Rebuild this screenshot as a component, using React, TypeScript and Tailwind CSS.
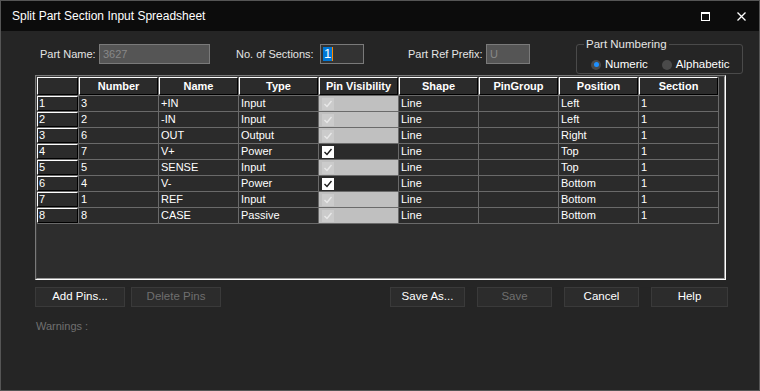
import React from "react";

type Row = {
  n: string;
  name: string;
  type: string;
  visible: boolean;
  shape: string;
  group: string;
  pos: string;
  sec: string;
};

const ROWS: Row[] = [
  { n: "3", name: "+IN", type: "Input", visible: false, shape: "Line", group: "", pos: "Left", sec: "1" },
  { n: "2", name: "-IN", type: "Input", visible: false, shape: "Line", group: "", pos: "Left", sec: "1" },
  { n: "6", name: "OUT", type: "Output", visible: false, shape: "Line", group: "", pos: "Right", sec: "1" },
  { n: "7", name: "V+", type: "Power", visible: true, shape: "Line", group: "", pos: "Top", sec: "1" },
  { n: "5", name: "SENSE", type: "Input", visible: false, shape: "Line", group: "", pos: "Top", sec: "1" },
  { n: "4", name: "V-", type: "Power", visible: true, shape: "Line", group: "", pos: "Bottom", sec: "1" },
  { n: "1", name: "REF", type: "Input", visible: false, shape: "Line", group: "", pos: "Bottom", sec: "1" },
  { n: "8", name: "CASE", type: "Passive", visible: false, shape: "Line", group: "", pos: "Bottom", sec: "1" },
];

const HEADERS = ["Number", "Name", "Type", "Pin Visibility", "Shape", "PinGroup", "Position", "Section"];

function Check({ enabled }: { enabled: boolean }) {
  return (
    <div
      className={`ml-[3px] w-[12px] h-[12px] flex items-center justify-center ${
        enabled ? "bg-white" : "bg-[#cbcbcb]"
      }`}
    >
      <svg width="10" height="10" viewBox="0 0 10 10">
        <polyline
          points="1.5,5 4,7.5 8.5,2"
          fill="none"
          stroke={enabled ? "#1a1a1a" : "#e8e8e8"}
          strokeWidth="1.4"
        />
      </svg>
    </div>
  );
}

function Cell({ children }: { children?: React.ReactNode }) {
  return (
    <div className="bg-[#2b2b2b] text-white pl-[2px] leading-[15px] whitespace-nowrap overflow-hidden">
      {children}
    </div>
  );
}

function Btn({ label, disabled, w }: { label: string; disabled?: boolean; w: string }) {
  return (
    <button
      className={`${w} h-[20px] bg-[#2c2c2c] border border-[#3a3a3a] text-[11.5px] ${
        disabled ? "text-[#6f6f6f]" : "text-white"
      } leading-none`}
    >
      {label}
    </button>
  );
}

export default function App() {
  return (
    <div className="w-[760px] h-[391px] bg-[#252525] border border-[#555] flex flex-col font-['Liberation_Sans',Arial,sans-serif] text-[11px] overflow-hidden">
      {/* Title bar */}
      <div className="h-[30px] shrink-0 bg-[#0c0c0c] flex items-center pl-[11px] text-white">
        <span className="text-[12px]">Split Part Section Input Spreadsheet</span>
        <div className="ml-auto flex items-center">
          <div className="w-[9px] h-[9px] border border-white border-t-2 mr-[27px]" />
          <svg width="9" height="9" viewBox="0 0 9 9" className="mr-[13px]">
            <path d="M0.5 0.5 L8.5 8.5 M8.5 0.5 L0.5 8.5" stroke="white" strokeWidth="1.3" />
          </svg>
        </div>
      </div>

      {/* Top fields */}
      <div className="flex items-start pl-[39px] pt-[13px] text-[#e4e4e4] text-[11px]">
        <span className="w-[59px] leading-[20px]">Part Name:</span>
        <div className="w-[111px] h-[20px] bg-[#555] border border-[#7a7a7a] text-[#888] pl-[3px] leading-[18px]">
          3627
        </div>
        <span className="ml-[26px] w-[84px] leading-[20px]">No. of Sections:</span>
        <div className="w-[44px] h-[20px] bg-[#333] border border-[#7a7a7a] pl-[2px] flex items-center">
          <span className="bg-[#0078d7] text-white leading-[14px] px-[1px] text-[13px]">1</span>
          <span className="w-px h-[14px] bg-[#ff8a00]" />
        </div>
        <span className="ml-[44px] w-[78px] leading-[20px]">Part Ref Prefix:</span>
        <div className="w-[44px] h-[20px] bg-[#555] border border-[#7a7a7a] text-[#888] pl-[3px] leading-[18px]">
          U
        </div>
        <div className="ml-[46px] w-[167px] h-[30px] border border-[#4a4a4a] rounded-[3px] relative">
          <span className="absolute -top-[9px] left-[7px] px-[2px] bg-[#252525] text-[#e6e6e6] leading-[16px] text-[11.5px]">
            Part Numbering
          </span>
          <div className="flex items-center mt-[11px] ml-[14px] text-[11.5px]">
            <div className="w-[10px] h-[10px] rounded-full bg-[#4a4a4a] flex items-center justify-center">
              <div className="w-[5px] h-[5px] rounded-full bg-[#1e90ff]" />
            </div>
            <span className="ml-[4px] text-white">Numeric</span>
            <div className="ml-[14px] w-[10px] h-[10px] rounded-full bg-[#4a4a4a]" />
            <span className="ml-[4px] text-white">Alphabetic</span>
          </div>
        </div>
      </div>

      {/* Table */}
      <div className="ml-[34px] mt-px w-[691px] h-[205px] border border-t-[#7a7a7a] border-l-[#7a7a7a] border-r-white border-b-white">
        <div className="w-full h-full border border-t-[#3a3a3a] border-l-[#3a3a3a] border-r-[#9a9a9a] border-b-[#9a9a9a] bg-[#2d2d2d]">
          <div className="inline-grid grid-cols-[41px_repeat(8,79px)] auto-rows-[15px] grid-rows-[18px] gap-px bg-[#6a6a6a] pr-px pb-px">
            <div className="bg-[#2b2b2b] border border-l-white border-t-white border-r-black border-b-black" />
            {HEADERS.map((h) => (
              <div
                key={h}
                className="bg-[#2b2b2b] border border-l-white border-t-white border-r-black border-b-black text-white font-bold text-center leading-[16px] whitespace-nowrap overflow-hidden"
              >
                {h}
              </div>
            ))}
            {ROWS.map((r, i) => (
              <React.Fragment key={i}>
                <div className="bg-[#2b2b2b] border border-l-white border-t-white border-r-black border-b-black text-white pl-px leading-[13px]">
                  {i + 1}
                </div>
                <Cell>{r.n}</Cell>
                <Cell>{r.name}</Cell>
                <Cell>{r.type}</Cell>
                <div className={`flex items-center ${r.visible ? "bg-[#2b2b2b]" : "bg-[#c0c0c0]"}`}>
                  <Check enabled={r.visible} />
                </div>
                <Cell>{r.shape}</Cell>
                <Cell>{r.group}</Cell>
                <Cell>{r.pos}</Cell>
                <Cell>{r.sec}</Cell>
              </React.Fragment>
            ))}
          </div>
        </div>
      </div>

      {/* Buttons */}
      <div className="flex items-center mt-[7px] pl-[34px]">
        <Btn label="Add Pins..." w="w-[90px]" />
        <div className="ml-[6px]">
          <Btn label="Delete Pins" w="w-[90px]" disabled />
        </div>
        <div className="ml-[169px] flex gap-[12px]">
          <Btn label="Save As..." w="w-[75px]" />
          <Btn label="Save" w="w-[75px]" disabled />
          <Btn label="Cancel" w="w-[75px]" />
          <Btn label="Help" w="w-[77px]" />
        </div>
      </div>

      <div className="mt-[12px] pl-[35px] text-[#707070] text-[11px] leading-[14px]">Warnings :</div>
    </div>
  );
}
